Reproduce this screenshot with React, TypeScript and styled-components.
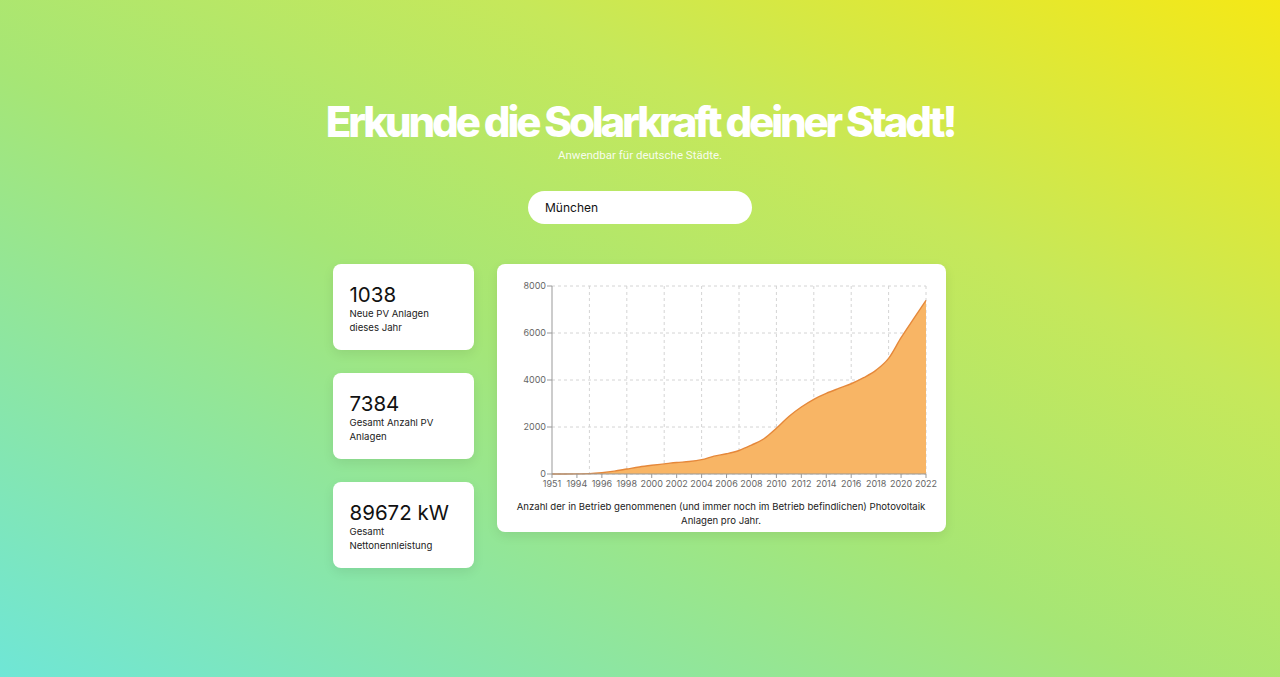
import React from "react";
import styled, { createGlobalStyle } from "styled-components";

const GlobalStyle = createGlobalStyle`
  html, body {
    margin: 0;
    padding: 0;
  }
  body {
    font-family: Inter, "Noto Sans", sans-serif;
    color: #111;
  }
  * {
    box-sizing: border-box;
  }
`;

const years = [
  1951, 1993, 1994, 1995, 1996, 1997, 1998, 1999, 2000, 2001, 2002, 2003, 2004, 2005, 2006, 2007,
  2008, 2009, 2010, 2011, 2012, 2013, 2014, 2015, 2016, 2017, 2018, 2019, 2020, 2021, 2022,
];
const values = [
  0, 0, 5, 15, 55, 120, 210, 300, 370, 430, 490, 530, 610, 760, 860, 1000,
  1230, 1500, 1950, 2450, 2850, 3180, 3430, 3640, 3840, 4100, 4420, 4920, 5800, 6600, 7384,
];

// chart geometry (inside svg)
const W = 417;
const H = 216;
const left = 39;
const right = 413;
const top = 10;
const bottom = 198;
const maxY = 8000;

const xAt = (i: number) => left + ((right - left) * i) / (years.length - 1);
const yAt = (v: number) => bottom - ((bottom - top) * v) / maxY;

const monotonePath = (xs: number[], ys: number[]) => {
  const n = xs.length;
  const s: number[] = [];
  for (let i = 0; i < n - 1; i++) s.push((ys[i + 1] - ys[i]) / (xs[i + 1] - xs[i]));
  const m: number[] = new Array(n).fill(0);
  for (let i = 1; i < n - 1; i++) {
    const h0 = xs[i] - xs[i - 1];
    const h1 = xs[i + 1] - xs[i];
    const s0 = s[i - 1];
    const s1 = s[i];
    const p = (s0 * h1 + s1 * h0) / (h0 + h1);
    m[i] = (Math.sign(s0) + Math.sign(s1)) * Math.min(Math.abs(s0), Math.abs(s1), 0.5 * Math.abs(p)) || 0;
  }
  m[0] = (3 * s[0] - m[1]) / 2;
  m[n - 1] = (3 * s[n - 2] - m[n - 2]) / 2;
  let d = `M${xs[0]},${ys[0]}`;
  for (let i = 0; i < n - 1; i++) {
    const dx = (xs[i + 1] - xs[i]) / 3;
    d += `C${xs[i] + dx},${ys[i] + dx * m[i]} ${xs[i + 1] - dx},${ys[i + 1] - dx * m[i + 1]} ${xs[i + 1]},${ys[i + 1]}`;
  }
  return d;
};

const Page = styled.div`
  min-height: 677px;
  background: linear-gradient(to top right, #6fe6d6 0%, #a6e675 45%, #c6e85a 70%, #f5e816 100%);
  display: flex;
  flex-direction: column;
  align-items: center;
  padding-top: 100px;
`;

const Title = styled.h1`
  margin: 0;
  font-size: 42px;
  line-height: 44px;
  font-weight: 800;
  letter-spacing: -0.075em;
  color: #fff;
`;

const Subtitle = styled.p`
  margin: 4px 0 0;
  font-family: Roboto, "Noto Sans", sans-serif;
  font-weight: 400;
  font-size: 11.5px;
  line-height: 14px;
  color: rgba(255, 255, 255, 0.9);
`;

const Search = styled.input`
  margin-top: 29px;
  width: 224px;
  height: 33px;
  border: none;
  outline: none;
  border-radius: 999px;
  background: #fff;
  padding: 0 17px;
  font-family: Inter, sans-serif;
  font-size: 12px;
  color: #111;
`;

const Row = styled.div`
  margin-top: 40px;
  margin-right: 2px;
  display: flex;
  gap: 23px;
  align-items: flex-start;
`;

const Stats = styled.div`
  display: flex;
  flex-direction: column;
  gap: 23px;
`;

const StatCard = styled.div`
  width: 141px;
  height: 86px;
  background: #fff;
  border-radius: 8px;
  box-shadow: 0 4px 12px rgba(0, 0, 0, 0.08);
  padding: 19px 16px 15px 17px;
`;

const StatNumber = styled.div`
  font-size: 20.5px;
  line-height: 24px;
  font-weight: 400;
  color: #111;
`;

const StatLabel = styled.div`
  max-width: 100px;
  font-size: 9.6px;
  line-height: 14px;
  color: #222;
`;

const ChartCard = styled.div`
  width: 449px;
  height: 268px;
  background: #fff;
  border-radius: 8px;
  box-shadow: 0 4px 12px rgba(0, 0, 0, 0.08);
  padding: 12px 16px 4px;
  display: flex;
  flex-direction: column;
`;

const ChartSvg = styled.svg`
  overflow: visible;
  display: block;
`;

const Caption = styled.p`
  margin: 8px 0 0;
  text-align: center;
  font-size: 9.6px;
  line-height: 14px;
  color: #222;
`;

const TickText = styled.text`
  font-family: Inter, sans-serif;
  font-size: 9px;
  fill: #666;
`;

const Chart = () => {
  const xs = years.map((_, i) => xAt(i));
  const ys = values.map((v) => yAt(v));
  const line = monotonePath(xs, ys);
  const area = `${line}L${xs[xs.length - 1]},${bottom}L${xs[0]},${bottom}Z`;
  const yTicks = [0, 2000, 4000, 6000, 8000];
  return (
    <ChartSvg width={W} height={H} viewBox={`0 0 ${W} ${H}`}>
      <g stroke="#d4d4d4" strokeDasharray="3 3" fill="none">
        {yTicks.map((t) => (
          <line key={t} x1={left} x2={right} y1={yAt(t)} y2={yAt(t)} />
        ))}
        {years.map((_, i) =>
          i % 3 === 0 && i > 0 ? <line key={i} x1={xAt(i)} x2={xAt(i)} y1={top} y2={bottom} /> : null
        )}
      </g>
      <path d={area} fill="#f8b565" />
      <path d={line} fill="none" stroke="#e5883a" strokeWidth={1.4} />
      <line x1={left} x2={left} y1={top} y2={bottom} stroke="#999" />
      <line x1={left} x2={right} y1={bottom} y2={bottom} stroke="#999" />
      {yTicks.map((t) => (
        <g key={t}>
          <line x1={left - 5} x2={left} y1={yAt(t)} y2={yAt(t)} stroke="#999" />
          <TickText x={left - 6} y={yAt(t) + 3} textAnchor="end">
            {t}
          </TickText>
        </g>
      ))}
      {years.map((y, i) =>
        i % 2 === 0 ? (
          <g key={y}>
            <line x1={xAt(i)} x2={xAt(i)} y1={bottom} y2={bottom + 4} stroke="#999" />
            <TickText x={xAt(i)} y={bottom + 13} textAnchor="middle">
              {y}
            </TickText>
          </g>
        ) : null
      )}
    </ChartSvg>
  );
};

const stats = [
  { value: "1038", label: "Neue PV Anlagen dieses Jahr" },
  { value: "7384", label: "Gesamt Anzahl PV Anlagen" },
  { value: "89672 kW", label: "Gesamt Nettonennleistung" },
];

const App = () => {
  return (
    <Page>
      <GlobalStyle />
      <Title>Erkunde die Solarkraft deiner Stadt!</Title>
      <Subtitle>Anwendbar für deutsche Städte.</Subtitle>
      <Search defaultValue="München" />
      <Row>
        <Stats>
          {stats.map((s) => (
            <StatCard key={s.value}>
              <StatNumber>{s.value}</StatNumber>
              <StatLabel>{s.label}</StatLabel>
            </StatCard>
          ))}
        </Stats>
        <ChartCard>
          <Chart />
          <Caption>
            Anzahl der in Betrieb genommenen (und immer noch im Betrieb befindlichen) Photovoltaik
            Anlagen pro Jahr.
          </Caption>
        </ChartCard>
      </Row>
    </Page>
  );
};

export default App;
